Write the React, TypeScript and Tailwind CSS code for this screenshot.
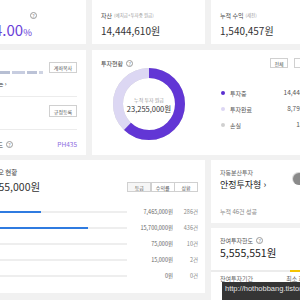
import React from "react";

const Q = () => (
  <span className="inline-flex items-center justify-center w-[7px] h-[7px] rounded-full border-[0.7px] border-[#9a9a9a] text-[5px] leading-none text-[#8a8a8a]">
    ?
  </span>
);

const Btn = ({ children, className = "" }: { children: React.ReactNode; className?: string }) => (
  <div
    className={
      "flex items-center justify-center border-[0.7px] border-[#d0d0d0] text-[5px] leading-none text-[#555] " + className
    }
  >
    {children}
  </div>
);

const rows = [
  { amount: 7465000, v: "7,465,000원", n: "286건" },
  { amount: 15700000, v: "15,700,000원", n: "436건" },
  { amount: 75000, v: "75,000원", n: "10건" },
  { amount: 15000, v: "15,000원", n: "2건" },
  { amount: 0, v: "0원", n: "0건" },
];

const legend = [
  { dot: "bg-[#5a2fd0]", label: "투자중", value: "14,444,610원" },
  { dot: "bg-[#dcd6f4]", label: "투자완료", value: "8,792,000원" },
  { dot: "bg-[#d0d0d0]", label: "손실", value: "18,390원" },
];

function Donut() {
  const r = 31;
  const c = 2 * Math.PI * r;
  const p1 = 0.6211 * c;
  const p2 = 0.3781 * c;
  return (
    <svg width="72" height="72" viewBox="0 0 72 72">
      <g transform="rotate(-90 36 36)">
        <circle cx="36" cy="36" r={r} fill="none" stroke="#d0d0d0" strokeWidth="10" />
        <circle
          cx="36"
          cy="36"
          r={r}
          fill="none"
          stroke="#dcd7f3"
          strokeWidth="10"
          strokeDasharray={`${p2} ${c}`}
          strokeDashoffset={-p1}
        />
        <circle cx="36" cy="36" r={r} fill="none" stroke="#6236d5" strokeWidth="10" strokeDasharray={`${p1} ${c}`} />
      </g>
    </svg>
  );
}

export default function App() {
  return (
    <div className="relative w-[300px] h-[300px] overflow-hidden bg-[#f1f1f1] font-['Noto_Sans_CJK_KR','Noto_Sans',sans-serif] text-[#333]">
      <div className="ml-[-11px] w-[342px] flex flex-col">
        {/* Row 1 */}
        <div className="grid grid-cols-[97px_113px_120px] gap-x-[6px]">
          <div className="h-[44px] bg-white px-[9px] pt-[11px]">
            <div className="h-[8px] flex items-center">
              <span className="ml-[32px] flex">
                <Q />
              </span>
            </div>
            <div className="ml-[-4px] mt-[2px] text-[15px] leading-[17px] text-[#6a40d8]">
              4.00<span className="text-[9.5px]">%</span>
            </div>
          </div>
          <div className="h-[44px] bg-white px-[9px] pt-[11px]">
            <div className="h-[8px] flex items-center gap-[2px]">
              <span className="text-[6px] text-[#444]">자산</span>
              <span className="text-[4.5px] text-[#999]">(예치금+투자중 원금)</span>
            </div>
            <div className="mt-[4.5px] text-[10px] leading-[13px] text-[#333]">14,444,610원</div>
          </div>
          <div className="h-[44px] bg-white px-[9px] pt-[11px]">
            <div className="h-[8px] flex items-center gap-[2px]">
              <span className="text-[6px] text-[#444]">누적 수익</span>
              <span className="text-[4.5px] text-[#999]">(세전)</span>
            </div>
            <div className="mt-[4.5px] text-[10px] leading-[13px] text-[#333]">1,540,457원</div>
          </div>
        </div>

        {/* Row 2 */}
        <div className="mt-[6px] grid grid-cols-[97px_113px_120px] gap-x-[6px]">
          <div className="h-[105px] bg-white px-[9px] flex flex-col">
            <div className="h-[47px] border-b-[0.7px] border-[#ececec] flex justify-between pt-[12px]">
              <div className="flex flex-col">
                <div className="mt-[9px] flex gap-[2px] blur-[0.5px]">
                  <div className="w-[12px] h-[3px] bg-[#b7bfd3]" />
                  <div className="w-[13px] h-[3px] bg-[#c7cde0]" />
                  <div className="w-[10px] h-[3px] bg-[#bcc3d7]" />
                  <div className="w-[4px] h-[3px] bg-[#cfd4e3]" />
                </div>
                <div className="mt-[6px] text-[6px] leading-[8px] text-[#333]">는 ›</div>
              </div>
              <Btn className="w-[28px] h-[11px] bg-white">계좌복사</Btn>
            </div>
            <div className="h-[33px] border-b-[0.7px] border-[#ececec] flex justify-end pt-[8px]">
              <Btn className="w-[28px] h-[12px] bg-white">규정등록</Btn>
            </div>
            <div className="flex-1 flex items-center justify-between pt-[4px]">
              <div className="flex items-center gap-[3px]">
                <span className="ml-[-6px] text-[6px] text-[#444]">코드</span>
                <Q />
              </div>
              <span className="text-[6.5px] text-[#8a6ae0]">PH435</span>
            </div>
          </div>

          <div className="col-span-2 h-[105px] bg-white px-[9px] pt-[8px]">
            <div className="flex items-center h-[10px]">
              <span className="text-[6px] text-[#444]">투자현황</span>
              <span className="ml-[3px] flex">
                <Q />
              </span>
              <div className="ml-auto flex gap-[6px]">
                <Btn className="w-[18px] h-[10px] bg-white">전체</Btn>
                <Btn className="w-[28px] h-[10px] bg-white">투자중</Btn>
              </div>
            </div>
            <div className="flex mt-[0px]">
              <div className="ml-[12px] relative w-[72px] h-[72px]">
                <Donut />
                <div className="absolute inset-0 flex flex-col items-center justify-center pt-[2px]">
                  <span className="text-[5px] leading-[7px] text-[#999]">누적 투자 원금</span>
                  <span className="text-[7.5px] leading-[11px] text-[#333]">23,255,000원</span>
                </div>
              </div>
              <div className="ml-[36px] mt-[17px] w-[104px] flex flex-col">
                {legend.map((l) => (
                  <div key={l.label} className="h-[16px] flex items-center">
                    <span className={"w-[4px] h-[4px] rounded-full " + l.dot} />
                    <span className="ml-[5px] text-[6px] text-[#555]">{l.label}</span>
                    <span className="ml-auto text-[6.5px] text-[#555]">{l.value}</span>
                  </div>
                ))}
              </div>
            </div>
          </div>
        </div>

        {/* Row 3 */}
        <div className="mt-[5px] grid grid-cols-[97px_113px_120px] gap-x-[6px] items-start">
          <div className="col-span-2 h-[133px] bg-white pl-[9px] pr-[7px] pt-[8px]">
            <div className="flex items-start">
              <div className="flex flex-col">
                <span className="ml-[-24px] text-[6.5px] leading-[8px] text-[#444]">포트폴리오 현황</span>
                <span className="ml-[-20px] mt-[3.5px] text-[10.5px] leading-[13px] text-[#333]">23,255,000원</span>
              </div>
              <div className="ml-auto mt-[14px] flex">
                <Btn className="w-[24px] h-[10px] bg-[#f6f6f6] border-[#bdbdbd]">등급</Btn>
                <Btn className="w-[24px] h-[10px] bg-white ml-[-0.7px]">수익률</Btn>
                <Btn className="w-[24px] h-[10px] bg-white ml-[-0.7px]">상환</Btn>
              </div>
            </div>
            <div className="mt-[11.5px] flex flex-col">
              {rows.map((r) => (
                <div key={r.v} className="h-[16px] flex items-center">
                  <div className="w-[129px] h-[2px] bg-[#eeeeee]">
                    <div className="h-full bg-[#2f7be0]" style={{ width: (r.amount / 15700000) * 90 }} />
                  </div>
                  <span className="w-[46px] text-right text-[5.5px] text-[#666]">{r.v}</span>
                  <span className="w-[25px] text-right text-[5.5px] text-[#888]">{r.n}</span>
                </div>
              ))}
            </div>
          </div>

          <div className="flex flex-col gap-[5px]">
            <div className="h-[63px] bg-white px-[9px] pt-[9px]">
              <div className="flex">
                <div className="flex flex-col">
                  <span className="text-[6px] leading-[8px] text-[#666]">자동분산투자</span>
                  <span className="mt-[2px] text-[9px] leading-[12px] text-[#222]">안정투자형 ›</span>
                </div>
                <div className="ml-auto mt-[3px] w-[30px] h-[13px] rounded-full bg-[#d9d9d9] p-[0.5px]">
                  <div className="w-[12px] h-[12px] rounded-full bg-[#8a8a8a]" />
                </div>
              </div>
              <div className="mt-[17px] text-[6px] leading-[8px] text-[#888]">누적 46건 성공</div>
            </div>
            <div className="h-[90px] bg-white px-[9px] pt-[8px]">
              <div className="h-[8px] flex items-center gap-[3px]">
                <span className="text-[6px] text-[#555]">잔여투자한도</span>
                <Q />
              </div>
              <div className="mt-[1.5px] text-[10.5px] leading-[13px] text-[#222]">5,555,551원</div>
              <div className="mt-[11.5px] -mx-[9px] h-[2px] bg-[#ececec] flex justify-end">
                <div className="w-[41px] h-full bg-[#f5c400]" />
              </div>
              <div className="mt-[3px] flex text-[6px] leading-[8px] text-[#666]">
                <span>잔여투자기간</span>
                <span className="ml-auto">최소 회도 조건</span>
              </div>
            </div>
          </div>
        </div>
      </div>

      <div className="absolute left-[222px] top-[282px] w-[90px] h-[20px] bg-[rgba(18,18,18,0.85)] pl-[3px] pt-[2px] font-['Liberation_Sans',sans-serif] text-[7.5px] leading-[10px] text-[#e4e4e4] whitespace-nowrap">
        http://hothobbang.tistory.com
      </div>
    </div>
  );
}
